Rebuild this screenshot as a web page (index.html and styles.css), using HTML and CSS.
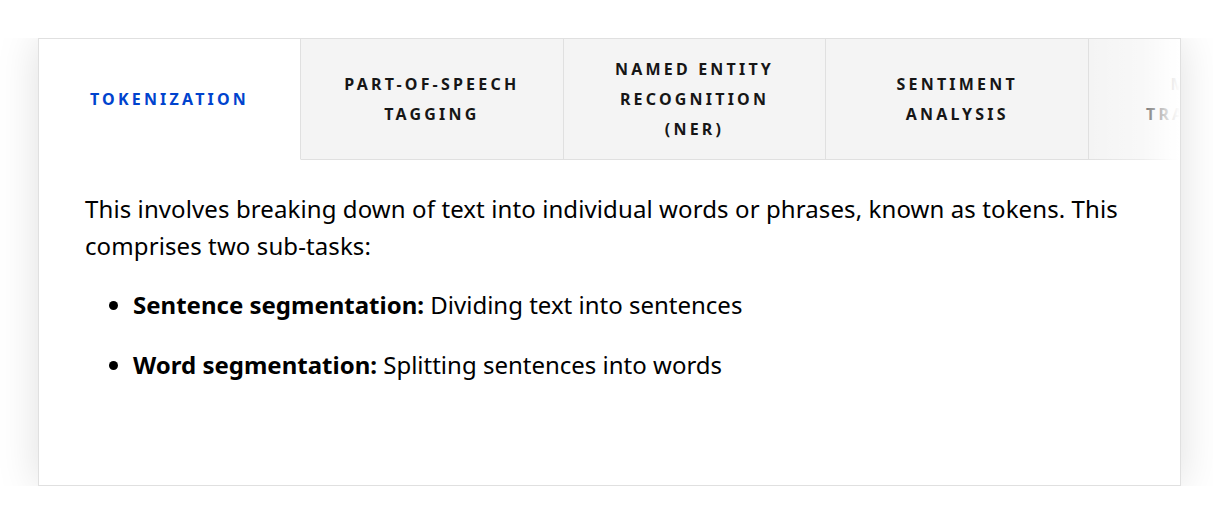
FILE: index.html
```html
<!DOCTYPE html>
<html lang="en">
<head>
<meta charset="utf-8">
<title>NLP tasks</title>
<link rel="stylesheet" href="styles.css">
</head>
<body>
<div class="card">
  <div class="tabs">
    <div class="tab active">TOKENIZATION</div>
    <div class="tab">PART-OF-SPEECH<br>TAGGING</div>
    <div class="tab">NAMED ENTITY<br>RECOGNITION<br>(NER)</div>
    <div class="tab">SENTIMENT<br>ANALYSIS</div>
    <div class="tab">MACHINE<br>TRANSLATION</div>
    <div class="fade"></div>
  </div>
  <div class="panel">
    <p class="intro">This involves breaking down of text into individual words or phrases, known as tokens. This comprises two sub-tasks:</p>
    <ul class="list">
      <li><strong>Sentence segmentation:</strong> Dividing text into sentences</li>
      <li><strong>Word segmentation:</strong> Splitting sentences into words</li>
    </ul>
  </div>
</div>
</body>
</html>
```

FILE: styles.css
```css
html, body {
  margin: 0;
  padding: 0;
  background: #ffffff;
}
body {
  padding: 38px 0 0 38px;
  font-family: "Noto Sans", "Open Sans", sans-serif;
  color: #000000;
}
.card {
  width: 1141px;
  height: 446px;
  border: 1px solid #e0e0e0;
  background: #ffffff;
  box-shadow: 0 0 40px rgba(0, 0, 0, 0.13);
  clip-path: inset(0 -60px);
  display: flex;
  flex-direction: column;
  overflow: hidden;
}
.tabs {
  position: relative;
  display: flex;
  height: 121px;
  flex: none;
  overflow: hidden;
}
.tab {
  flex: none;
  width: 262.7px;
  box-sizing: border-box;
  background: #f4f4f4;
  border-right: 1px solid #e0e0e0;
  border-bottom: 1px solid #e0e0e0;
  display: flex;
  align-items: center;
  justify-content: center;
  text-align: center;
  font-weight: 700;
  font-size: 16px;
  line-height: 30px;
  letter-spacing: 3.2px;
  color: #161616;
}
.tab.active {
  width: 262px;
  background: #ffffff;
  border-bottom-color: #ffffff;
  color: #0043ce;
}
.fade {
  position: absolute;
  top: 0;
  right: 0;
  width: 92px;
  height: 121px;
  background: linear-gradient(to right, rgba(255,255,255,0), rgba(255,255,255,0.4) 60%, rgba(255,255,255,0.9) 90%, #ffffff);
}
.panel {
  padding: 30px 46px 0 46px;
}
.intro {
  margin: 0;
  font-size: 24px;
  line-height: 37px;
  letter-spacing: 0.1px;
}
.list {
  margin: 22px 0 0 0;
  padding: 0 0 0 48px;
  font-size: 24px;
  line-height: 37px;
}
.list li {
  margin-bottom: 23px;
}
.list strong {
  font-weight: 700;
}
```
